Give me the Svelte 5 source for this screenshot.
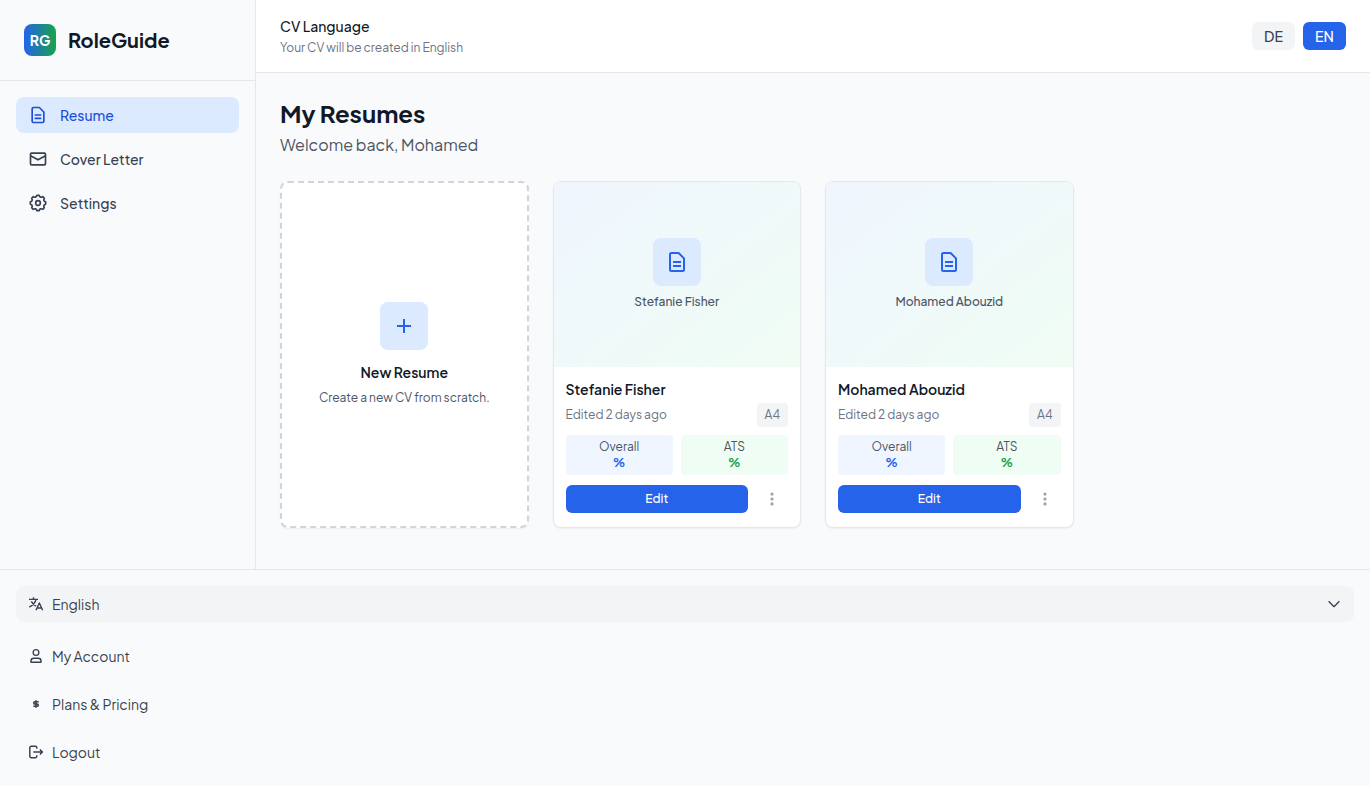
<script>
  const nav = [
    { label: 'Resume', icon: 'file', active: true },
    { label: 'Cover Letter', icon: 'mail', active: false },
    { label: 'Settings', icon: 'gear', active: false }
  ];
  const account = [
    { label: 'My Account', icon: 'user' },
    { label: 'Plans & Pricing', icon: 'dollar' },
    { label: 'Logout', icon: 'logout' }
  ];
  const resumes = [
    { name: 'Stefanie Fisher', edited: 'Edited 2 days ago', format: 'A4' },
    { name: 'Mohamed Abouzid', edited: 'Edited 2 days ago', format: 'A4' }
  ];
  let language = $state('EN');
</script>

{#snippet icon(name, size)}
  <svg class="icon" width={size} height={size} viewBox="0 0 24 24" fill="none" stroke="currentColor" stroke-width="2" stroke-linejoin="round">
    {#if name === 'file'}
      <path d="M5 4.5A1.5 1.5 0 0 1 6.5 3H13.6L19 8.4V19.5A1.5 1.5 0 0 1 17.5 21H6.5A1.5 1.5 0 0 1 5 19.5ZM8 12H16M8 16H16" />
    {:else if name === 'mail'}
      <rect x="3" y="5" width="18" height="14" rx="1.3" />
      <path d="M3 8 12 13 21 8" />
    {:else if name === 'gear'}
      <circle cx="12" cy="12" r="2.8" />
      <path d="M10.7 2.8H13.3Q14.37 6.27 17.73 4.43L19.57 6.27Q17.73 9.63 21.2 10.7V13.3Q17.73 14.37 19.57 17.73L17.73 19.57Q14.37 17.73 13.3 21.2H10.7Q9.63 17.73 6.27 19.57L4.43 17.73Q6.27 14.37 2.8 13.3V10.7Q6.27 9.63 4.43 6.27L6.27 4.43Q9.63 6.27 10.7 2.8Z" />
    {:else if name === 'plus'}
      <path d="M12 5V19M5 12H19" />
    {:else if name === 'translate'}
      <path d="M1.5 5H15M8.2 2V5M12 5C11 10 7 14 2 16.5M5 8C6.5 11 9 13.5 12 15M12 21.5 17 10.5 22 21.5M14 18H20" stroke-width="2.1" />
    {:else if name === 'chevron'}
      <path d="M4 8 12 16 20 8" />
    {:else if name === 'user'}
      <circle cx="12" cy="6.7" r="4.3" />
      <path d="M4.5 21.5V19.5C4.5 17 6.5 15.5 9 15.5H15C17.5 15.5 19.5 17 19.5 19.5V21.5Z" stroke-width="2.2" />
    {:else if name === 'dollar'}
      <path d="M16 8.7H10.2C8 8.7 8 12 10.2 12H13.8C16 12 16 15.3 13.8 15.3H8M12 6.5V17.5" stroke-width="2.3" />
    {:else if name === 'logout'}
      <path d="M13.2 7V5.5A2 2 0 0 0 11.2 3.5H4.7A2 2 0 0 0 2.7 5.5V18.5A2 2 0 0 0 4.7 20.5H11.2A2 2 0 0 0 13.2 18.5V17M8 12H21.5M17.8 8.2 21.6 12 17.8 15.8" stroke-width="2.2" />
    {:else if name === 'dots'}
      <g fill="currentColor" stroke="none">
        <circle cx="12" cy="4.6" r="2.4" /><circle cx="12" cy="12" r="2.4" /><circle cx="12" cy="19.4" r="2.4" />
      </g>
    {/if}
  </svg>
{/snippet}

<div class="page">
  <div class="top">
    <aside>
      <div class="brand">
        <div class="logo">RG</div>
        <span class="brand-name">RoleGuide</span>
      </div>
      <nav>
        {#each nav as item}
          <a class="nav-item" class:active={item.active} href="#{item.icon}">
            {@render icon(item.icon, 20)}<span>{item.label}</span>
          </a>
        {/each}
      </nav>
    </aside>

    <div class="content">
      <header>
        <div>
          <div class="lang-title">CV Language</div>
          <div class="lang-sub">Your CV will be created in English</div>
        </div>
        <div class="toggle">
          {#each ['DE', 'EN'] as code}
            <button class:selected={language === code} onclick={() => (language = code)}>{code}</button>
          {/each}
        </div>
      </header>

      <main>
        <h1>My Resumes</h1>
        <p class="welcome">Welcome back, Mohamed</p>
        <div class="grid">
          <div class="new-card">
            <div class="tile">{@render icon('plus', 24)}</div>
            <div class="new-title">New Resume</div>
            <div class="new-sub">Create a new CV from scratch.</div>
          </div>
          {#each resumes as resume}
            <article>
              <div class="preview">
                <div class="tile">{@render icon('file', 24)}</div>
                <div class="preview-name">{resume.name}</div>
              </div>
              <div class="body">
                <div class="name">{resume.name}</div>
                <div class="meta"><span>{resume.edited}</span><span class="format">{resume.format}</span></div>
                <div class="scores">
                  <div class="score overall"><span>Overall</span><b>%</b></div>
                  <div class="score ats"><span>ATS</span><b>%</b></div>
                </div>
                <div class="actions">
                  <button class="edit">Edit</button>
                  <button class="more" aria-label="More">{@render icon('dots', 16)}</button>
                </div>
              </div>
            </article>
          {/each}
        </div>
      </main>
    </div>
  </div>

  <footer>
    <button class="row select">
      {@render icon('translate', 16)}<span class="grow">English</span>{@render icon('chevron', 16)}
    </button>
    {#each account as item}
      <a class="row" href="#{item.icon}">{@render icon(item.icon, 16)}<span>{item.label}</span></a>
    {/each}
  </footer>
</div>

<style>
  :global(body) { background: #f9fafb; }
  * { box-sizing: border-box; }
  .page {
    font-family: 'Plus Jakarta Sans', Inter, sans-serif;
    font-size: 14px;
    line-height: 20px;
    color: #111827;
    background: #f9fafc;
    height: 786px;
    overflow: hidden;
    display: flex;
    flex-direction: column;
  }
  button { font: inherit; border: 0; padding: 0; margin: 0; color: inherit; }
  a { color: inherit; text-decoration: none; }
  .icon { display: block; flex: none; }
  .top { display: flex; height: 569px; }
  aside { width: 256px; border-right: 1px solid #e5e7eb; }
  .brand { display: flex; align-items: center; gap: 12px; height: 81px; padding: 0 24px; border-bottom: 1px solid #e5e7eb; }
  .logo {
    width: 32px; height: 32px; border-radius: 8px; color: #fff;
    background: linear-gradient(90deg, #2563eb, #16a34a);
    display: grid; place-items: center;
    font-weight: 700; font-size: 14px;
  }
  .brand-name { font-size: 20px; line-height: 28px; font-weight: 700; }
  nav { display: flex; flex-direction: column; gap: 8px; padding: 16px; }
  .nav-item {
    display: flex; align-items: center; gap: 12px; height: 36px; padding: 0 12px;
    border-radius: 8px; font-weight: 500; color: #374151;
  }
  .nav-item.active { background: #dbeafe; color: #1d4ed8; }
  .content { flex: 1; }
  header {
    display: flex; justify-content: space-between; align-items: center;
    height: 73px; padding: 0 24px; background: #fff; border-bottom: 1px solid #e5e7eb;
  }
  .lang-title { font-weight: 500; }
  .lang-sub { margin: 2px 0 -1px; font-size: 12px; color: #6b7280; }
  .toggle { display: flex; gap: 8px; }
  .toggle button { width: 43px; height: 28px; border-radius: 6px; background: #f3f4f6; color: #374151; font-weight: 500; }
  .toggle button.selected { background: #2563eb; color: #fff; }
  main { padding: 24px; }
  h1 { margin: 0 0 4px; font-size: 24px; line-height: 32px; font-weight: 700; }
  .welcome { margin: 0 0 24px; font-size: 16px; line-height: 24px; color: #4b5563; }
  .grid { display: grid; grid-template-columns: repeat(4, 1fr); gap: 24px; }
  .new-card, article { height: 347px; background: #fff; border-radius: 8px; box-shadow: 0 1px 2px rgba(0, 0, 0, 0.05); }
  .new-card {
    border: 2px dashed #d1d5db;
    display: flex; flex-direction: column; align-items: center; justify-content: center;
  }
  .tile { width: 48px; height: 48px; border-radius: 8px; background: #dbeafe; color: #2563eb; display: grid; place-items: center; }
  .new-title { margin-top: 12px; font-weight: 600; }
  .new-sub { margin-top: 6px; font-size: 12px; line-height: 20px; color: #4b5563; }
  article { border: 1px solid #e5e7eb; overflow: hidden; }
  .preview {
    height: 185px; padding-bottom: 1px; background: linear-gradient(to bottom right, #eff6ff, #f0fdf4);
    display: flex; flex-direction: column; align-items: center; justify-content: center; gap: 8px;
  }
  .preview-name { font-size: 12px; line-height: 16px; font-weight: 500; color: #4b5563; }
  .body { padding: 12px; }
  .name { font-weight: 600; }
  .meta { display: flex; align-items: center; justify-content: space-between; margin-top: 4px; height: 24px; font-size: 12px; color: #6b7280; }
  .format { padding: 0 8px; height: 24px; line-height: 24px; border-radius: 4px; background: #f3f4f6; text-align: center; }
  .scores { display: grid; grid-template-columns: 1fr 1fr; gap: 8px; margin-top: 8px; }
  .score { height: 40px; padding-top: 4px; border-radius: 4px; display: flex; flex-direction: column; align-items: center; font-size: 12px; line-height: 16px; color: #4b5563; }
  .overall { background: #eff6ff; }
  .ats { background: #f0fdf4; }
  .score b { font-weight: 700; }
  .overall b { color: #2563eb; }
  .ats b { color: #16a34a; }
  .actions { display: flex; gap: 8px; margin-top: 10px; }
  .edit { flex: 1; height: 28px; border-radius: 6px; background: #2563eb; color: #fff; font-size: 12px; font-weight: 500; }
  .more { width: 32px; height: 28px; background: none; color: #9ca3af; display: grid; place-items: center; }
  footer { height: 217px; border-top: 1px solid #e5e7eb; padding: 16px; display: flex; flex-direction: column; gap: 12px; }
  .row { display: flex; align-items: center; gap: 8px; height: 36px; padding: 0 12px; border-radius: 8px; color: #374151; text-align: left; }
  .select { background: #f3f4f6; margin-bottom: 4px; }
  .grow { flex: 1; }
</style>
